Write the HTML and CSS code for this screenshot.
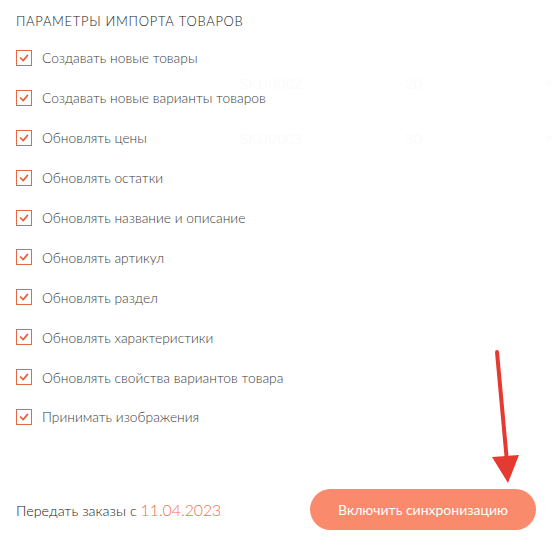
FILE: index.html
```html
<!DOCTYPE html>
<html lang="ru">
<head>
<meta charset="utf-8">
<link rel="stylesheet" href="styles.css">
</head>
<body>
<div class="page">
  <div class="ghost">
    <div class="ghost-row r1"><span class="g-sku">SKU0002</span><span class="g-qty">20</span><span class="g-inf">∞</span></div>
    <div class="ghost-row r2"><span class="g-sku">SKU0003</span><span class="g-qty">30</span><span class="g-inf">∞</span></div>
  </div>
  <h2 class="title">ПАРАМЕТРЫ ИМПОРТА ТОВАРОВ</h2>
  <ul class="options">
    <li class="opt"><span class="box"><svg viewBox="0 0 16 16"><polyline points="4,8 7,11 12,5"/></svg></span><span class="label">Создавать новые товары</span></li>
    <li class="opt"><span class="box"><svg viewBox="0 0 16 16"><polyline points="4,8 7,11 12,5"/></svg></span><span class="label">Создавать новые варианты товаров</span></li>
    <li class="opt"><span class="box"><svg viewBox="0 0 16 16"><polyline points="4,8 7,11 12,5"/></svg></span><span class="label">Обновлять цены</span></li>
    <li class="opt"><span class="box"><svg viewBox="0 0 16 16"><polyline points="4,8 7,11 12,5"/></svg></span><span class="label">Обновлять остатки</span></li>
    <li class="opt"><span class="box"><svg viewBox="0 0 16 16"><polyline points="4,8 7,11 12,5"/></svg></span><span class="label">Обновлять название и описание</span></li>
    <li class="opt"><span class="box"><svg viewBox="0 0 16 16"><polyline points="4,8 7,11 12,5"/></svg></span><span class="label">Обновлять артикул</span></li>
    <li class="opt"><span class="box"><svg viewBox="0 0 16 16"><polyline points="4,8 7,11 12,5"/></svg></span><span class="label">Обновлять раздел</span></li>
    <li class="opt"><span class="box"><svg viewBox="0 0 16 16"><polyline points="4,8 7,11 12,5"/></svg></span><span class="label">Обновлять характеристики</span></li>
    <li class="opt"><span class="box"><svg viewBox="0 0 16 16"><polyline points="4,8 7,11 12,5"/></svg></span><span class="label">Обновлять свойства вариантов товара</span></li>
    <li class="opt"><span class="box"><svg viewBox="0 0 16 16"><polyline points="4,8 7,11 12,5"/></svg></span><span class="label">Принимать изображения</span></li>
  </ul>
  <div class="footer">
    <div class="orders">Передать заказы с <span class="date">11.04.2023</span></div>
    <button class="sync">Включить синхронизацию</button>
  </div>
  <svg class="arrow" viewBox="0 0 559 554" width="559" height="554">
    <line x1="497" y1="352" x2="507" y2="462" />
    <polygon points="492,457 519,455 508,483" />
  </svg>
</div>
</body>
</html>
```

FILE: styles.css
```css
html, body {
  margin: 0;
  padding: 0;
  background: #ffffff;
}
.page {
  position: relative;
  width: 559px;
  height: 554px;
  box-sizing: border-box;
  padding: 11px 23px 0 16px;
  font-family: "Lato", "Noto Sans", sans-serif;
  color: #444444;
  overflow: hidden;
}
.title {
  margin: 0;
  font-size: 13px;
  font-weight: 300;
  line-height: 20px;
  letter-spacing: 0.7px;
  color: #222222;
}
.options {
  list-style: none;
  margin: 7px 0 0 0;
  padding: 0;
}
.opt {
  display: flex;
  align-items: center;
  height: 39.9px;
}
.box {
  width: 16px;
  height: 16px;
  box-sizing: border-box;
  border: 1px solid #e36a45;
  display: flex;
  align-items: center;
  justify-content: center;
  flex: none;
}
.box svg {
  width: 14px;
  height: 14px;
}
.box polyline {
  fill: none;
  stroke: #e8643c;
  stroke-width: 2;
  stroke-linecap: round;
  stroke-linejoin: round;
}
.label {
  margin-left: 10px;
  font-size: 13.8px;
  font-weight: 300;
  color: #3c3c3c;
}
.footer {
  margin-top: 52px;
  display: flex;
  align-items: center;
  justify-content: space-between;
}
.orders {
  font-size: 14.4px;
  font-weight: 300;
  color: #222222;
}
.date {
  color: #f26d50;
  font-size: 15.8px;
}
.sync {
  width: 226px;
  height: 41px;
  border: none;
  border-radius: 21px;
  background: #f98a6c;
  color: #ffffff;
  font-family: "Lato", "Noto Sans", sans-serif;
  font-size: 14px;
  padding: 0;
}
.ghost {
  position: absolute;
  left: 240px;
  top: 0;
  width: 319px;
  color: #fbfbfb;
  font-family: "Open Sans", sans-serif;
  font-size: 15px;
}
.ghost-row {
  position: absolute;
  left: 0;
  width: 319px;
  height: 20px;
  line-height: 20px;
}
.ghost-row.r1 { top: 73px; }
.ghost-row.r2 { top: 128px; }
.g-sku { position: absolute; left: 0; }
.g-qty { position: absolute; left: 165px; }
.g-inf { position: absolute; left: 305px; font-size: 12px; }
.arrow {
  position: absolute;
  left: 0;
  top: 0;
  pointer-events: none;
}
.arrow line {
  stroke: #e53a32;
  stroke-width: 4;
  stroke-linecap: round;
}
.arrow polygon {
  fill: #e53a32;
}
```
